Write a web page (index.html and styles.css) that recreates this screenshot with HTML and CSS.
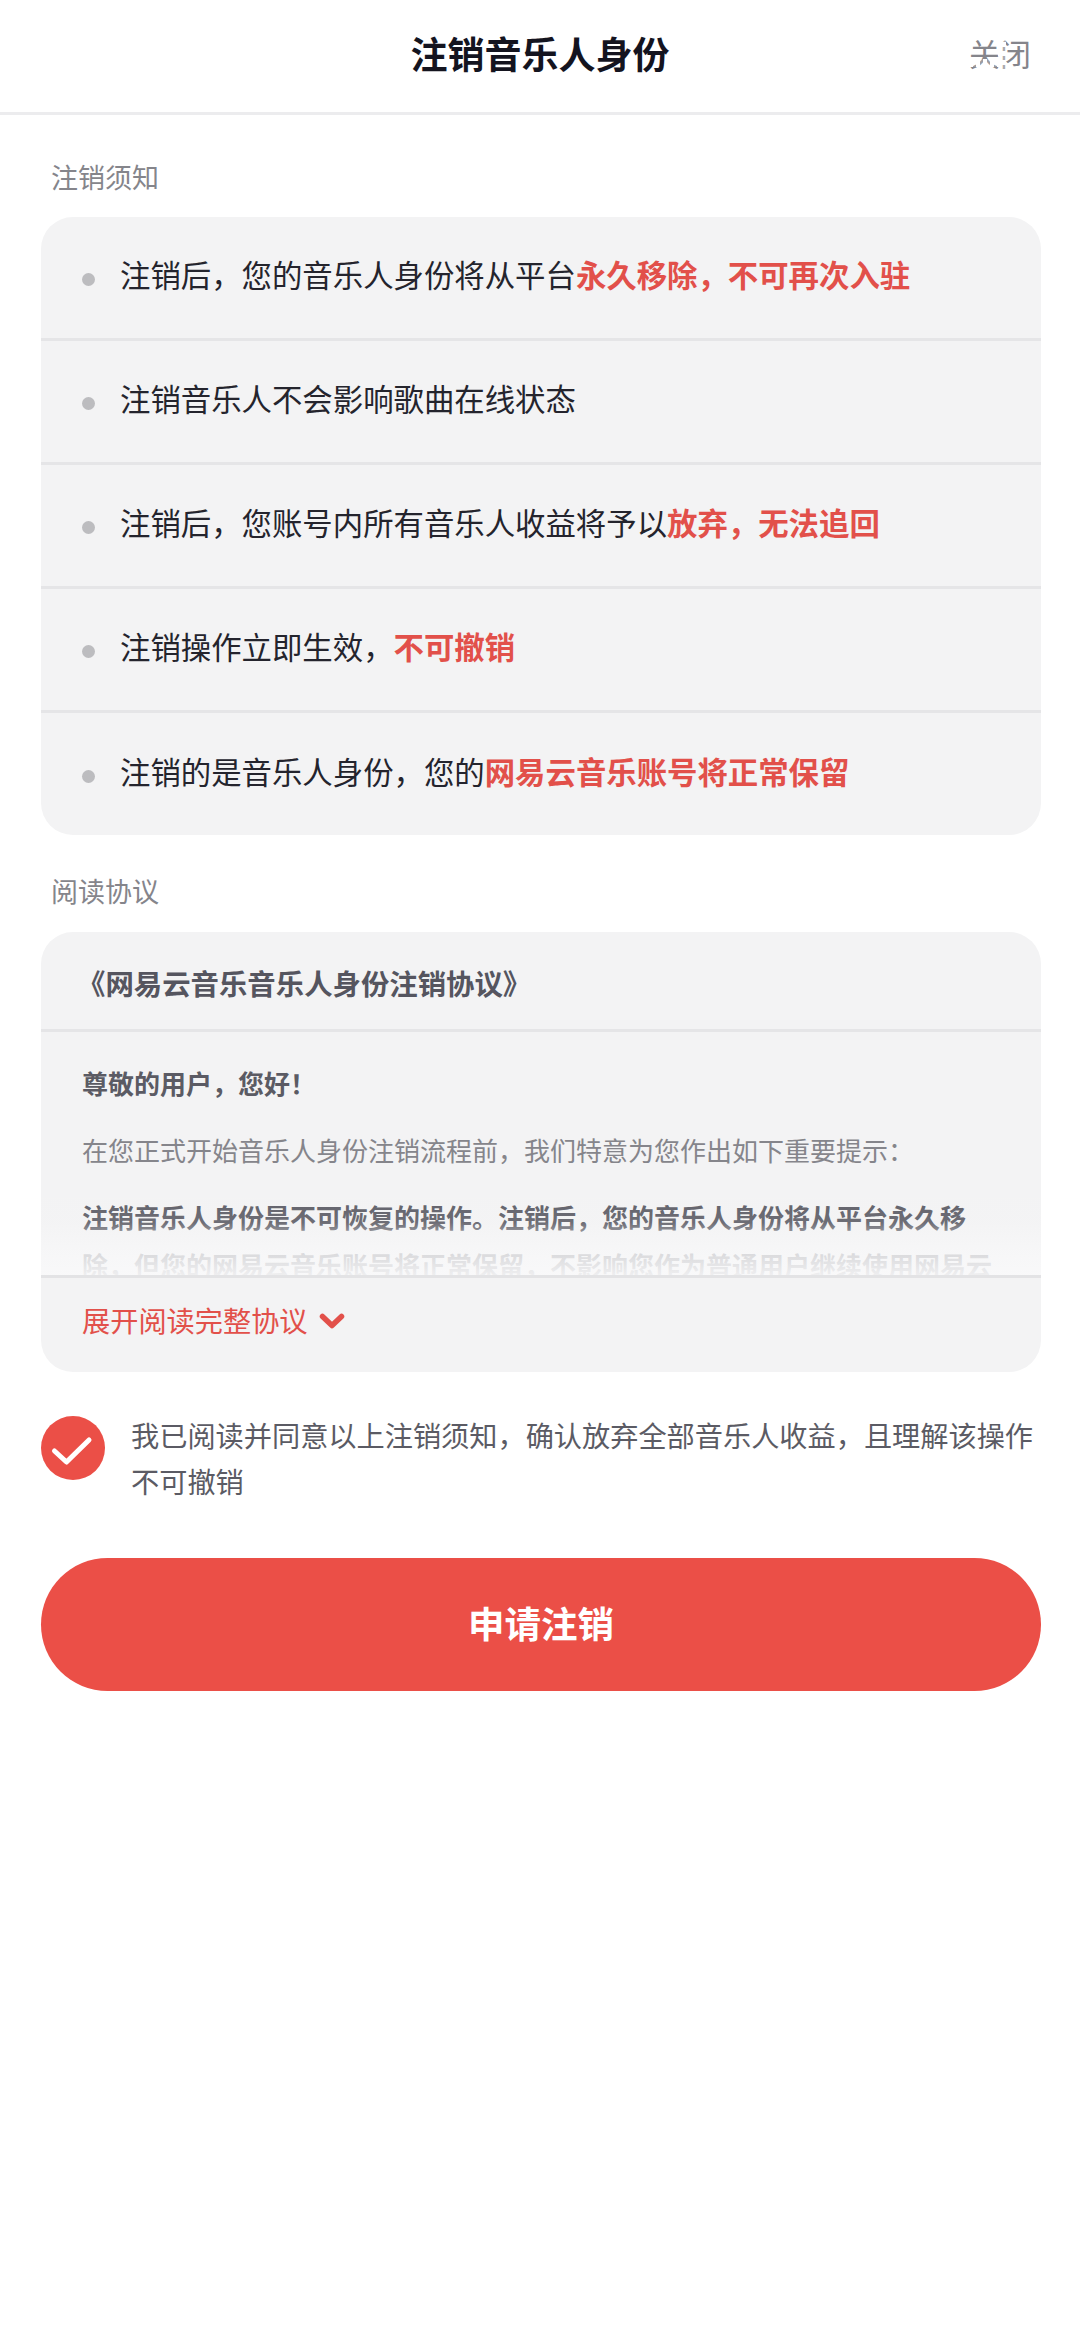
FILE: index.html
```html
<!DOCTYPE html>
<html lang="zh-CN">
<head>
<meta charset="utf-8">
<title>注销音乐人身份</title>
<link rel="stylesheet" href="styles.css">
</head>
<body>
<header class="topbar">
  <span></span>
  <h1 class="title">注销音乐人身份</h1>
  <span class="close">关闭</span>
</header>
<main class="page">
  <h2 class="label label-first">注销须知</h2>
  <ul class="card notices">
    <li class="notice"><i class="dot"></i><span class="notice-text">注销后，您的音乐人身份将从平台<b class="hl">永久移除，不可再次入驻</b></span></li>
    <li class="notice"><i class="dot"></i><span class="notice-text">注销音乐人不会影响歌曲在线状态</span></li>
    <li class="notice"><i class="dot"></i><span class="notice-text">注销后，您账号内所有音乐人收益将予以<b class="hl">放弃，无法追回</b></span></li>
    <li class="notice"><i class="dot"></i><span class="notice-text">注销操作立即生效，<b class="hl">不可撤销</b></span></li>
    <li class="notice"><i class="dot"></i><span class="notice-text">注销的是音乐人身份，您的<b class="hl">网易云音乐账号将正常保留</b></span></li>
  </ul>
  <h2 class="label label-second">阅读协议</h2>
  <section class="card agreement">
    <div class="agreement-title">《网易云音乐音乐人身份注销协议》</div>
    <div class="agreement-body">
      <p class="para strong">尊敬的用户，您好！</p>
      <p class="para">在您正式开始音乐人身份注销流程前，我们特意为您作出如下重要提示：</p>
      <p class="para strong">注销音乐人身份是不可恢复的操作。注销后，您的音乐人身份将从平台永久移除，但您的网易云音乐账号将正常保留，不影响您作为普通用户继续使用网易云</p>
      <div class="fade"></div>
    </div>
    <div class="expand">
      <span>展开阅读完整协议</span>
      <svg class="chev" width="26" height="16" viewBox="0 0 26 16"><path d="M3.500 3.500 13 12.500 22.500 3.500" fill="none" stroke="#e2504a" stroke-width="5.500" stroke-linecap="round" stroke-linejoin="round"/></svg>
    </div>
  </section>
  <div class="consent">
    <svg class="check" width="64" height="64" viewBox="0 0 64 64"><circle cx="32" cy="32" r="32" fill="#eb4f47"/><path d="M13.500 35 25.500 46 48 24" fill="none" stroke="#fff" stroke-width="5" stroke-linecap="round" stroke-linejoin="round"/></svg>
    <p class="consent-text">我已阅读并同意以上注销须知，确认放弃全部音乐人收益，且理解该操作不可撤销</p>
  </div>
  <button class="submit"><span class="submit-text">申请注销</span></button>
</main>
</body>
</html>
```
FILE: styles.css
```css
* { box-sizing: border-box; }
html, body { margin: 0; padding: 0; background: #fff; }
body {
  width: 1080px;
  height: 2340px;
  overflow: hidden;
  font-family: "Noto Sans CJK SC", "Noto Sans", sans-serif;
  color: #24242d;
}
.topbar {
  height: 115px;
  border-bottom: 3px solid #ececee;
  display: grid;
  grid-template-columns: 1fr auto 1fr;
  align-items: center;
  padding: 0 49px 7px;
}
.title {
  margin: 0;
  font-size: 37px;
  line-height: 50px;
  font-weight: 700;
  color: #14141f;
}
.close {
  position: relative;
  justify-self: end;
  font-size: 31px;
  line-height: 40px;
  color: #85858b;
}
.close::before {
  content: "";
  position: absolute;
  left: 0;
  width: 30px;
  bottom: 6px;
  height: 8px;
  background: repeating-linear-gradient(to right, #fff 0 4px, rgba(255,255,255,.2) 4px 7px);
}
.close::after {
  content: "";
  position: absolute;
  top: 0;
  bottom: 0;
  left: 29px;
  width: 8px;
  background: repeating-linear-gradient(to bottom, #fff 0 5px, rgba(255,255,255,.3) 5px 9px);
}
.page { padding: 0 39px 0 41px; }
.label {
  margin: 0;
  padding-left: 10px;
  font-size: 27px;
  line-height: 38px;
  font-weight: 400;
  color: #85858b;
}
.label-first { margin-top: 43px; margin-bottom: 21px; }
.label-second { margin-top: 37px; margin-bottom: 22px; }
.card {
  margin: 0;
  padding: 0;
  list-style: none;
  background: #f3f3f4;
  border-radius: 32px;
  overflow: hidden;
}
.notice {
  height: 124px;
  display: flex;
  align-items: center;
  padding-left: 41px;
  font-size: 30.4px;
  border-bottom: 3px solid #e5e5e7;
}
.notice:last-child { height: 122px; border-bottom: 0; }
.notice-text { margin-bottom: 7px; }
.dot {
  flex: none;
  width: 13px;
  height: 13px;
  margin: 4px 25px 0 0;
  border-radius: 50%;
  background: #bcbcbf;
}
.hl { font-weight: 700; color: #e2504a; }
.agreement-title {
  height: 100px;
  border-bottom: 3px solid #e5e5e7;
  padding: 29px 0 0 36px;
  font-size: 28.4px;
  line-height: 44px;
  font-weight: 700;
  color: #55555f;
}
.agreement-body {
  position: relative;
  height: 246px;
  overflow: hidden;
  border-bottom: 3px solid #e3e3e5;
  padding: 27px 40px 0 41px;
}
.para {
  margin: 0 0 19px;
  font-size: 26px;
  line-height: 48px;
  color: #85858b;
}
.para.strong { font-weight: 700; color: #5b5b64; }
.fade {
  position: absolute;
  left: 0;
  right: 0;
  bottom: 0;
  height: 90px;
  background: linear-gradient(to bottom, rgba(247,247,248,0), rgba(247,247,248,.12) 42%, rgba(247,247,248,.78) 70%, rgba(249,249,250,.93));
}
.expand {
  height: 94px;
  display: flex;
  align-items: center;
  gap: 11px;
  padding: 0 0 12px 41px;
  font-size: 28.2px;
  color: #e2504a;
}
.chev { flex: none; margin-top: 4px; }
.consent {
  display: flex;
  align-items: flex-start;
  gap: 26px;
  margin-top: 41px;
}
.check { flex: none; margin-top: 3px; }
.consent-text {
  margin: -1px 0 0;
  font-size: 28.2px;
  line-height: 46px;
  color: #5b5b64;
}
.submit {
  display: block;
  width: 1000px;
  height: 133px;
  margin-top: 54px;
  padding: 0 0 4px;
  border: 0;
  border-radius: 67px;
  background: #eb4f47;
  color: #fff;
  font-family: inherit;
  font-size: 36.5px;
  font-weight: 700;
}
```
